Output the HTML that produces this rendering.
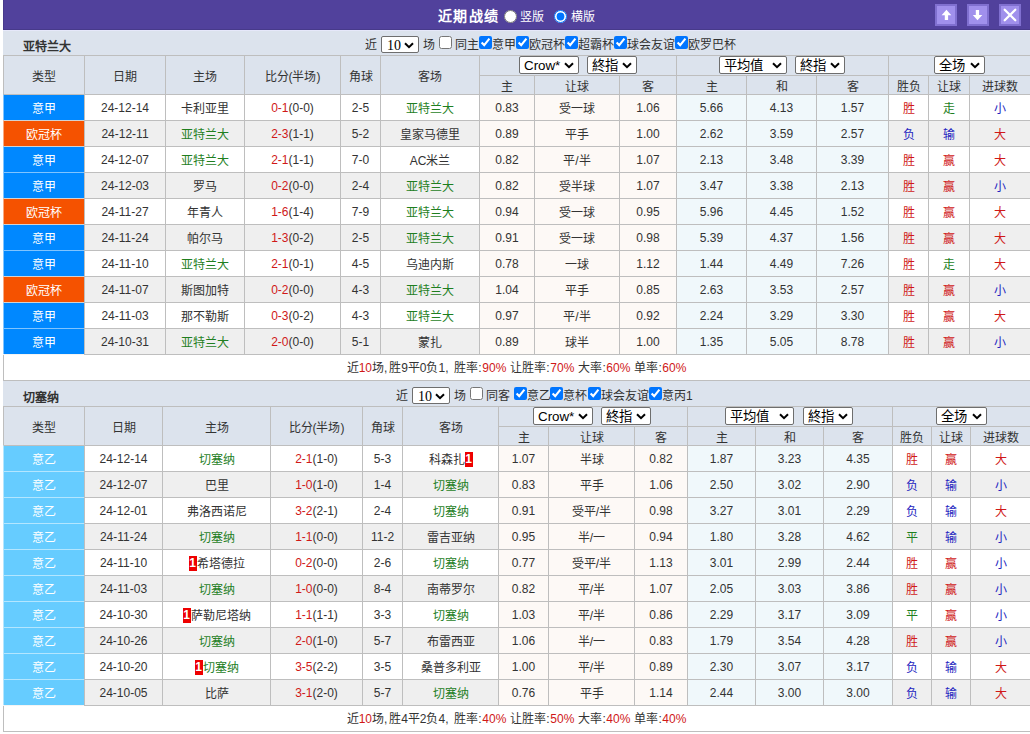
<!DOCTYPE html>
<html lang="zh-CN"><head><meta charset="utf-8">
<style>
html,body{margin:0;padding:0;background:#fff;}
body{width:1030px;height:734px;overflow:hidden;position:relative;font-family:"Liberation Sans",sans-serif;font-size:12px;color:#333333;}
body>div,body>select,body>input{position:absolute;box-sizing:border-box;}
.t{white-space:nowrap;text-align:center;z-index:3;}
.b{font-weight:bold;text-align:left;}
.cm{letter-spacing:1.8px;}
.co{letter-spacing:0.6px;}
.sm{word-spacing:0.7px;}
.bd{display:inline-block;background:#e00;color:#fff;width:8px;height:15px;line-height:15px;text-align:center;vertical-align:top;margin-top:4px;font-weight:bold;}
.rad{width:13px;height:13px;margin:0;}
.btn{width:22px;height:22px;background:#a090ec;border:2px solid #8070d0;box-sizing:border-box;display:flex;align-items:center;justify-content:center;}
.btn svg{display:block;}
.sel{z-index:4;border:1px solid #6e6e6e;border-radius:2px;background:#fff;color:#000;font-size:13.33px;}
.sel span{position:absolute;top:1px;line-height:16px;white-space:nowrap;}
.sel .chev{position:absolute;right:4px;top:5px;}
.cb{z-index:4;width:13px;height:13px;margin:0;}
</style></head><body>
<div style="left:3px;top:0px;width:1027px;height:30px;background:#51419c"></div>
<div style="left:3px;top:29px;width:1027px;height:1px;background:#473a8a"></div>
<div style="left:3px;top:30px;width:1027px;height:1px;background:#e6e8fa;z-index:1"></div>
<div style="left:3px;top:0px;width:1px;height:29px;background:#483a8c"></div>
<div class="t" style="left:438px;top:0;height:30px;line-height:32px;color:#fff;font-size:14px;letter-spacing:1.3px;font-weight:bold">近期战绩</div>
<input type="radio" name="r" class="rad" style="left:504px;top:10px">
<div class="t" style="left:520px;top:0;height:30px;line-height:35px;color:#fff">竖版</div>
<input type="radio" name="r" checked class="rad" style="left:554px;top:10px">
<div class="t" style="left:571px;top:0;height:30px;line-height:35px;color:#fff">横版</div>
<div class="btn" style="left:935px;top:4px"><svg width="18" height="18" viewBox="0 0 18 18"><path d="M4.6 9.2 L9.45 3.8 L14.3 9.2 L11.1 9.2 L11.1 14 L7.8 14 L7.8 9.2 Z" fill="#fff"/></svg></div>
<div class="btn" style="left:967px;top:4px"><svg width="18" height="18" viewBox="0 0 18 18"><path d="M6.8 4 L10.1 4 L10.1 8.9 L13.3 8.9 L8.5 14.3 L3.8 8.9 L6.8 8.9 Z" fill="#fff"/></svg></div>
<div class="btn" style="left:999px;top:4px"><svg width="18" height="18" viewBox="0 0 18 18"><path d="M3.7 3.7 L14.3 14.3 M14.3 3.7 L3.7 14.3" stroke="#fff" stroke-width="2.3" stroke-linecap="round"/></svg></div>
<div style="left:3px;top:30px;width:1027px;height:25px;background:#dce3ed"></div>
<div class="t b" style="left:23px;top:34px;height:25px;line-height:26px">亚特兰大</div>
<div class="t" style="left:365px;top:30px;height:25px;line-height:30px">近</div><div class="t" style="left:423px;top:30px;height:25px;line-height:30px">场</div><input type="checkbox" class="cb" style="left:439px;top:36px"><div class="t" style="left:455px;top:30px;height:25px;line-height:30px">同主</div><input type="checkbox" checked class="cb" style="left:479px;top:36px"><div class="t" style="left:492px;top:30px;height:25px;line-height:30px">意甲</div><input type="checkbox" checked class="cb" style="left:516px;top:36px"><div class="t" style="left:529px;top:30px;height:25px;line-height:30px">欧冠杯</div><input type="checkbox" checked class="cb" style="left:565px;top:36px"><div class="t" style="left:578px;top:30px;height:25px;line-height:30px">超霸杯</div><input type="checkbox" checked class="cb" style="left:614px;top:36px"><div class="t" style="left:627px;top:30px;height:25px;line-height:30px">球会友谊</div><input type="checkbox" checked class="cb" style="left:675px;top:36px"><div class="t" style="left:688px;top:30px;height:25px;line-height:30px">欧罗巴杯</div>
<div style="left:3px;top:55px;width:1027px;height:39px;background:#dce3ed"></div>
<div style="left:3px;top:55px;width:1027px;height:1px;background:#bebebe;z-index:2"></div>
<div style="left:3px;top:94px;width:1027px;height:1px;background:#bebebe;z-index:2"></div>
<div style="left:479px;top:75px;width:551px;height:1px;background:#bebebe;z-index:2"></div>
<div style="left:3px;top:55px;width:1px;height:39px;background:#bebebe;z-index:2"></div>
<div style="left:84px;top:55px;width:1px;height:39px;background:#bebebe;z-index:2"></div>
<div style="left:165px;top:55px;width:1px;height:39px;background:#bebebe;z-index:2"></div>
<div style="left:244px;top:55px;width:1px;height:39px;background:#bebebe;z-index:2"></div>
<div style="left:340px;top:55px;width:1px;height:39px;background:#bebebe;z-index:2"></div>
<div style="left:380px;top:55px;width:1px;height:39px;background:#bebebe;z-index:2"></div>
<div style="left:479px;top:55px;width:1px;height:39px;background:#bebebe;z-index:2"></div>
<div style="left:534px;top:75px;width:1px;height:19px;background:#bebebe;z-index:2"></div>
<div style="left:619px;top:75px;width:1px;height:19px;background:#bebebe;z-index:2"></div>
<div style="left:676px;top:55px;width:1px;height:39px;background:#bebebe;z-index:2"></div>
<div style="left:746px;top:75px;width:1px;height:19px;background:#bebebe;z-index:2"></div>
<div style="left:816px;top:75px;width:1px;height:19px;background:#bebebe;z-index:2"></div>
<div style="left:888px;top:55px;width:1px;height:39px;background:#bebebe;z-index:2"></div>
<div style="left:928px;top:75px;width:1px;height:19px;background:#bebebe;z-index:2"></div>
<div style="left:969px;top:75px;width:1px;height:19px;background:#bebebe;z-index:2"></div>
<div class="t" style="left:4px;top:58px;width:80px;height:38px;line-height:38px;">类型</div>
<div class="t" style="left:85px;top:58px;width:80px;height:38px;line-height:38px;">日期</div>
<div class="t" style="left:166px;top:58px;width:78px;height:38px;line-height:38px;">主场</div>
<div class="t" style="left:245px;top:58px;width:95px;height:38px;line-height:38px;">比分(半场)</div>
<div class="t" style="left:341px;top:58px;width:39px;height:38px;line-height:38px;">角球</div>
<div class="t" style="left:381px;top:58px;width:98px;height:38px;line-height:38px;">客场</div>
<div class="t" style="left:480px;top:78px;width:54px;height:18px;line-height:18px;">主</div>
<div class="t" style="left:535px;top:78px;width:84px;height:18px;line-height:18px;">让球</div>
<div class="t" style="left:620px;top:78px;width:56px;height:18px;line-height:18px;">客</div>
<div class="t" style="left:677px;top:78px;width:69px;height:18px;line-height:18px;">主</div>
<div class="t" style="left:747px;top:78px;width:69px;height:18px;line-height:18px;">和</div>
<div class="t" style="left:817px;top:78px;width:71px;height:18px;line-height:18px;">客</div>
<div class="t" style="left:889px;top:78px;width:39px;height:18px;line-height:18px;">胜负</div>
<div class="t" style="left:929px;top:78px;width:40px;height:18px;line-height:18px;">让球</div>
<div class="t" style="left:970px;top:78px;width:60px;height:18px;line-height:18px;">进球数</div>
<div style="left:3px;top:94px;width:1027px;height:26px;background:#ffffff"></div>
<div style="left:480px;top:95px;width:196px;height:25px;background:#fdf9f6"></div>
<div style="left:677px;top:95px;width:211px;height:25px;background:#f0f8fb"></div>
<div style="left:3px;top:94px;width:81px;height:26px;background:#0088ff;border-top:1px solid #bebebe;border-left:1px solid rgba(255,255,255,.5);z-index:3"></div>
<div style="left:3px;top:120px;width:1027px;height:1px;background:#bebebe;z-index:2"></div>
<div style="left:3px;top:94px;width:1px;height:26px;background:#bebebe;z-index:2"></div>
<div style="left:84px;top:94px;width:1px;height:26px;background:#bebebe;z-index:2"></div>
<div style="left:165px;top:94px;width:1px;height:26px;background:#bebebe;z-index:2"></div>
<div style="left:244px;top:94px;width:1px;height:26px;background:#bebebe;z-index:2"></div>
<div style="left:340px;top:94px;width:1px;height:26px;background:#bebebe;z-index:2"></div>
<div style="left:380px;top:94px;width:1px;height:26px;background:#bebebe;z-index:2"></div>
<div style="left:479px;top:94px;width:1px;height:26px;background:#bebebe;z-index:2"></div>
<div style="left:534px;top:94px;width:1px;height:26px;background:#bebebe;z-index:2"></div>
<div style="left:619px;top:94px;width:1px;height:26px;background:#bebebe;z-index:2"></div>
<div style="left:676px;top:94px;width:1px;height:26px;background:#bebebe;z-index:2"></div>
<div style="left:746px;top:94px;width:1px;height:26px;background:#bebebe;z-index:2"></div>
<div style="left:816px;top:94px;width:1px;height:26px;background:#bebebe;z-index:2"></div>
<div style="left:888px;top:94px;width:1px;height:26px;background:#bebebe;z-index:2"></div>
<div style="left:928px;top:94px;width:1px;height:26px;background:#bebebe;z-index:2"></div>
<div style="left:969px;top:94px;width:1px;height:26px;background:#bebebe;z-index:2"></div>
<div class="t" style="left:4px;top:97px;width:80px;height:25px;line-height:25px;"><span style="color:#fff">意甲</span></div>
<div class="t" style="left:85px;top:96px;width:80px;height:25px;line-height:25px;">24-12-14</div>
<div class="t" style="left:166px;top:97px;width:78px;height:25px;line-height:25px;">卡利亚里</div>
<div class="t" style="left:245px;top:96px;width:95px;height:25px;line-height:25px;"><span style="color:#d01818">0-1</span>(0-0)</div>
<div class="t" style="left:341px;top:96px;width:39px;height:25px;line-height:25px;">2-5</div>
<div class="t" style="left:381px;top:97px;width:98px;height:25px;line-height:25px;"><span style="color:#1f7f1f">亚特兰大</span></div>
<div class="t" style="left:480px;top:96px;width:54px;height:25px;line-height:25px;">0.83</div>
<div class="t" style="left:535px;top:97px;width:84px;height:25px;line-height:25px;">受一球</div>
<div class="t" style="left:620px;top:96px;width:56px;height:25px;line-height:25px;">1.06</div>
<div class="t" style="left:677px;top:96px;width:69px;height:25px;line-height:25px;">5.66</div>
<div class="t" style="left:747px;top:96px;width:69px;height:25px;line-height:25px;">4.13</div>
<div class="t" style="left:817px;top:96px;width:71px;height:25px;line-height:25px;">1.57</div>
<div class="t" style="left:889px;top:97px;width:39px;height:25px;line-height:25px;"><span style="color:#d01818">胜</span></div>
<div class="t" style="left:929px;top:97px;width:40px;height:25px;line-height:25px;"><span style="color:#1f7f1f">走</span></div>
<div class="t" style="left:970px;top:97px;width:60px;height:25px;line-height:25px;"><span style="color:#2424c0">小</span></div>
<div style="left:3px;top:120px;width:1027px;height:26px;background:#efefef"></div>
<div style="left:480px;top:121px;width:196px;height:25px;background:#fdf9f6"></div>
<div style="left:677px;top:121px;width:211px;height:25px;background:#f0f8fb"></div>
<div style="left:3px;top:120px;width:81px;height:26px;background:#f55200;border-top:1px solid #d2d2d2;border-left:1px solid rgba(255,255,255,.5);z-index:3"></div>
<div style="left:3px;top:146px;width:1027px;height:1px;background:#bebebe;z-index:2"></div>
<div style="left:3px;top:120px;width:1px;height:26px;background:#bebebe;z-index:2"></div>
<div style="left:84px;top:120px;width:1px;height:26px;background:#bebebe;z-index:2"></div>
<div style="left:165px;top:120px;width:1px;height:26px;background:#bebebe;z-index:2"></div>
<div style="left:244px;top:120px;width:1px;height:26px;background:#bebebe;z-index:2"></div>
<div style="left:340px;top:120px;width:1px;height:26px;background:#bebebe;z-index:2"></div>
<div style="left:380px;top:120px;width:1px;height:26px;background:#bebebe;z-index:2"></div>
<div style="left:479px;top:120px;width:1px;height:26px;background:#bebebe;z-index:2"></div>
<div style="left:534px;top:120px;width:1px;height:26px;background:#bebebe;z-index:2"></div>
<div style="left:619px;top:120px;width:1px;height:26px;background:#bebebe;z-index:2"></div>
<div style="left:676px;top:120px;width:1px;height:26px;background:#bebebe;z-index:2"></div>
<div style="left:746px;top:120px;width:1px;height:26px;background:#bebebe;z-index:2"></div>
<div style="left:816px;top:120px;width:1px;height:26px;background:#bebebe;z-index:2"></div>
<div style="left:888px;top:120px;width:1px;height:26px;background:#bebebe;z-index:2"></div>
<div style="left:928px;top:120px;width:1px;height:26px;background:#bebebe;z-index:2"></div>
<div style="left:969px;top:120px;width:1px;height:26px;background:#bebebe;z-index:2"></div>
<div class="t" style="left:4px;top:123px;width:80px;height:25px;line-height:25px;"><span style="color:#fff">欧冠杯</span></div>
<div class="t" style="left:85px;top:122px;width:80px;height:25px;line-height:25px;">24-12-11</div>
<div class="t" style="left:166px;top:123px;width:78px;height:25px;line-height:25px;"><span style="color:#1f7f1f">亚特兰大</span></div>
<div class="t" style="left:245px;top:122px;width:95px;height:25px;line-height:25px;"><span style="color:#d01818">2-3</span>(1-1)</div>
<div class="t" style="left:341px;top:122px;width:39px;height:25px;line-height:25px;">5-2</div>
<div class="t" style="left:381px;top:123px;width:98px;height:25px;line-height:25px;">皇家马德里</div>
<div class="t" style="left:480px;top:122px;width:54px;height:25px;line-height:25px;">0.89</div>
<div class="t" style="left:535px;top:123px;width:84px;height:25px;line-height:25px;">平手</div>
<div class="t" style="left:620px;top:122px;width:56px;height:25px;line-height:25px;">1.00</div>
<div class="t" style="left:677px;top:122px;width:69px;height:25px;line-height:25px;">2.62</div>
<div class="t" style="left:747px;top:122px;width:69px;height:25px;line-height:25px;">3.59</div>
<div class="t" style="left:817px;top:122px;width:71px;height:25px;line-height:25px;">2.57</div>
<div class="t" style="left:889px;top:123px;width:39px;height:25px;line-height:25px;"><span style="color:#2424c0">负</span></div>
<div class="t" style="left:929px;top:123px;width:40px;height:25px;line-height:25px;"><span style="color:#2424c0">输</span></div>
<div class="t" style="left:970px;top:123px;width:60px;height:25px;line-height:25px;"><span style="color:#d01818">大</span></div>
<div style="left:3px;top:146px;width:1027px;height:26px;background:#ffffff"></div>
<div style="left:480px;top:147px;width:196px;height:25px;background:#fdf9f6"></div>
<div style="left:677px;top:147px;width:211px;height:25px;background:#f0f8fb"></div>
<div style="left:3px;top:146px;width:81px;height:26px;background:#0088ff;border-top:1px solid #d2d2d2;border-left:1px solid rgba(255,255,255,.5);z-index:3"></div>
<div style="left:3px;top:172px;width:1027px;height:1px;background:#bebebe;z-index:2"></div>
<div style="left:3px;top:146px;width:1px;height:26px;background:#bebebe;z-index:2"></div>
<div style="left:84px;top:146px;width:1px;height:26px;background:#bebebe;z-index:2"></div>
<div style="left:165px;top:146px;width:1px;height:26px;background:#bebebe;z-index:2"></div>
<div style="left:244px;top:146px;width:1px;height:26px;background:#bebebe;z-index:2"></div>
<div style="left:340px;top:146px;width:1px;height:26px;background:#bebebe;z-index:2"></div>
<div style="left:380px;top:146px;width:1px;height:26px;background:#bebebe;z-index:2"></div>
<div style="left:479px;top:146px;width:1px;height:26px;background:#bebebe;z-index:2"></div>
<div style="left:534px;top:146px;width:1px;height:26px;background:#bebebe;z-index:2"></div>
<div style="left:619px;top:146px;width:1px;height:26px;background:#bebebe;z-index:2"></div>
<div style="left:676px;top:146px;width:1px;height:26px;background:#bebebe;z-index:2"></div>
<div style="left:746px;top:146px;width:1px;height:26px;background:#bebebe;z-index:2"></div>
<div style="left:816px;top:146px;width:1px;height:26px;background:#bebebe;z-index:2"></div>
<div style="left:888px;top:146px;width:1px;height:26px;background:#bebebe;z-index:2"></div>
<div style="left:928px;top:146px;width:1px;height:26px;background:#bebebe;z-index:2"></div>
<div style="left:969px;top:146px;width:1px;height:26px;background:#bebebe;z-index:2"></div>
<div class="t" style="left:4px;top:149px;width:80px;height:25px;line-height:25px;"><span style="color:#fff">意甲</span></div>
<div class="t" style="left:85px;top:148px;width:80px;height:25px;line-height:25px;">24-12-07</div>
<div class="t" style="left:166px;top:149px;width:78px;height:25px;line-height:25px;"><span style="color:#1f7f1f">亚特兰大</span></div>
<div class="t" style="left:245px;top:148px;width:95px;height:25px;line-height:25px;"><span style="color:#d01818">2-1</span>(1-1)</div>
<div class="t" style="left:341px;top:148px;width:39px;height:25px;line-height:25px;">7-0</div>
<div class="t" style="left:381px;top:149px;width:98px;height:25px;line-height:25px;">AC米兰</div>
<div class="t" style="left:480px;top:148px;width:54px;height:25px;line-height:25px;">0.82</div>
<div class="t" style="left:535px;top:149px;width:84px;height:25px;line-height:25px;">平/半</div>
<div class="t" style="left:620px;top:148px;width:56px;height:25px;line-height:25px;">1.07</div>
<div class="t" style="left:677px;top:148px;width:69px;height:25px;line-height:25px;">2.13</div>
<div class="t" style="left:747px;top:148px;width:69px;height:25px;line-height:25px;">3.48</div>
<div class="t" style="left:817px;top:148px;width:71px;height:25px;line-height:25px;">3.39</div>
<div class="t" style="left:889px;top:149px;width:39px;height:25px;line-height:25px;"><span style="color:#d01818">胜</span></div>
<div class="t" style="left:929px;top:149px;width:40px;height:25px;line-height:25px;"><span style="color:#d01818">赢</span></div>
<div class="t" style="left:970px;top:149px;width:60px;height:25px;line-height:25px;"><span style="color:#d01818">大</span></div>
<div style="left:3px;top:172px;width:1027px;height:26px;background:#efefef"></div>
<div style="left:480px;top:173px;width:196px;height:25px;background:#fdf9f6"></div>
<div style="left:677px;top:173px;width:211px;height:25px;background:#f0f8fb"></div>
<div style="left:3px;top:172px;width:81px;height:26px;background:#0088ff;border-top:1px solid rgba(255,255,255,.5);border-left:1px solid rgba(255,255,255,.5);z-index:3"></div>
<div style="left:3px;top:198px;width:1027px;height:1px;background:#bebebe;z-index:2"></div>
<div style="left:3px;top:172px;width:1px;height:26px;background:#bebebe;z-index:2"></div>
<div style="left:84px;top:172px;width:1px;height:26px;background:#bebebe;z-index:2"></div>
<div style="left:165px;top:172px;width:1px;height:26px;background:#bebebe;z-index:2"></div>
<div style="left:244px;top:172px;width:1px;height:26px;background:#bebebe;z-index:2"></div>
<div style="left:340px;top:172px;width:1px;height:26px;background:#bebebe;z-index:2"></div>
<div style="left:380px;top:172px;width:1px;height:26px;background:#bebebe;z-index:2"></div>
<div style="left:479px;top:172px;width:1px;height:26px;background:#bebebe;z-index:2"></div>
<div style="left:534px;top:172px;width:1px;height:26px;background:#bebebe;z-index:2"></div>
<div style="left:619px;top:172px;width:1px;height:26px;background:#bebebe;z-index:2"></div>
<div style="left:676px;top:172px;width:1px;height:26px;background:#bebebe;z-index:2"></div>
<div style="left:746px;top:172px;width:1px;height:26px;background:#bebebe;z-index:2"></div>
<div style="left:816px;top:172px;width:1px;height:26px;background:#bebebe;z-index:2"></div>
<div style="left:888px;top:172px;width:1px;height:26px;background:#bebebe;z-index:2"></div>
<div style="left:928px;top:172px;width:1px;height:26px;background:#bebebe;z-index:2"></div>
<div style="left:969px;top:172px;width:1px;height:26px;background:#bebebe;z-index:2"></div>
<div class="t" style="left:4px;top:175px;width:80px;height:25px;line-height:25px;"><span style="color:#fff">意甲</span></div>
<div class="t" style="left:85px;top:174px;width:80px;height:25px;line-height:25px;">24-12-03</div>
<div class="t" style="left:166px;top:175px;width:78px;height:25px;line-height:25px;">罗马</div>
<div class="t" style="left:245px;top:174px;width:95px;height:25px;line-height:25px;"><span style="color:#d01818">0-2</span>(0-0)</div>
<div class="t" style="left:341px;top:174px;width:39px;height:25px;line-height:25px;">2-4</div>
<div class="t" style="left:381px;top:175px;width:98px;height:25px;line-height:25px;"><span style="color:#1f7f1f">亚特兰大</span></div>
<div class="t" style="left:480px;top:174px;width:54px;height:25px;line-height:25px;">0.82</div>
<div class="t" style="left:535px;top:175px;width:84px;height:25px;line-height:25px;">受半球</div>
<div class="t" style="left:620px;top:174px;width:56px;height:25px;line-height:25px;">1.07</div>
<div class="t" style="left:677px;top:174px;width:69px;height:25px;line-height:25px;">3.47</div>
<div class="t" style="left:747px;top:174px;width:69px;height:25px;line-height:25px;">3.38</div>
<div class="t" style="left:817px;top:174px;width:71px;height:25px;line-height:25px;">2.13</div>
<div class="t" style="left:889px;top:175px;width:39px;height:25px;line-height:25px;"><span style="color:#d01818">胜</span></div>
<div class="t" style="left:929px;top:175px;width:40px;height:25px;line-height:25px;"><span style="color:#d01818">赢</span></div>
<div class="t" style="left:970px;top:175px;width:60px;height:25px;line-height:25px;"><span style="color:#2424c0">小</span></div>
<div style="left:3px;top:198px;width:1027px;height:26px;background:#ffffff"></div>
<div style="left:480px;top:199px;width:196px;height:25px;background:#fdf9f6"></div>
<div style="left:677px;top:199px;width:211px;height:25px;background:#f0f8fb"></div>
<div style="left:3px;top:198px;width:81px;height:26px;background:#f55200;border-top:1px solid #d2d2d2;border-left:1px solid rgba(255,255,255,.5);z-index:3"></div>
<div style="left:3px;top:224px;width:1027px;height:1px;background:#bebebe;z-index:2"></div>
<div style="left:3px;top:198px;width:1px;height:26px;background:#bebebe;z-index:2"></div>
<div style="left:84px;top:198px;width:1px;height:26px;background:#bebebe;z-index:2"></div>
<div style="left:165px;top:198px;width:1px;height:26px;background:#bebebe;z-index:2"></div>
<div style="left:244px;top:198px;width:1px;height:26px;background:#bebebe;z-index:2"></div>
<div style="left:340px;top:198px;width:1px;height:26px;background:#bebebe;z-index:2"></div>
<div style="left:380px;top:198px;width:1px;height:26px;background:#bebebe;z-index:2"></div>
<div style="left:479px;top:198px;width:1px;height:26px;background:#bebebe;z-index:2"></div>
<div style="left:534px;top:198px;width:1px;height:26px;background:#bebebe;z-index:2"></div>
<div style="left:619px;top:198px;width:1px;height:26px;background:#bebebe;z-index:2"></div>
<div style="left:676px;top:198px;width:1px;height:26px;background:#bebebe;z-index:2"></div>
<div style="left:746px;top:198px;width:1px;height:26px;background:#bebebe;z-index:2"></div>
<div style="left:816px;top:198px;width:1px;height:26px;background:#bebebe;z-index:2"></div>
<div style="left:888px;top:198px;width:1px;height:26px;background:#bebebe;z-index:2"></div>
<div style="left:928px;top:198px;width:1px;height:26px;background:#bebebe;z-index:2"></div>
<div style="left:969px;top:198px;width:1px;height:26px;background:#bebebe;z-index:2"></div>
<div class="t" style="left:4px;top:201px;width:80px;height:25px;line-height:25px;"><span style="color:#fff">欧冠杯</span></div>
<div class="t" style="left:85px;top:200px;width:80px;height:25px;line-height:25px;">24-11-27</div>
<div class="t" style="left:166px;top:201px;width:78px;height:25px;line-height:25px;">年青人</div>
<div class="t" style="left:245px;top:200px;width:95px;height:25px;line-height:25px;"><span style="color:#d01818">1-6</span>(1-4)</div>
<div class="t" style="left:341px;top:200px;width:39px;height:25px;line-height:25px;">7-9</div>
<div class="t" style="left:381px;top:201px;width:98px;height:25px;line-height:25px;"><span style="color:#1f7f1f">亚特兰大</span></div>
<div class="t" style="left:480px;top:200px;width:54px;height:25px;line-height:25px;">0.94</div>
<div class="t" style="left:535px;top:201px;width:84px;height:25px;line-height:25px;">受一球</div>
<div class="t" style="left:620px;top:200px;width:56px;height:25px;line-height:25px;">0.95</div>
<div class="t" style="left:677px;top:200px;width:69px;height:25px;line-height:25px;">5.96</div>
<div class="t" style="left:747px;top:200px;width:69px;height:25px;line-height:25px;">4.45</div>
<div class="t" style="left:817px;top:200px;width:71px;height:25px;line-height:25px;">1.52</div>
<div class="t" style="left:889px;top:201px;width:39px;height:25px;line-height:25px;"><span style="color:#d01818">胜</span></div>
<div class="t" style="left:929px;top:201px;width:40px;height:25px;line-height:25px;"><span style="color:#d01818">赢</span></div>
<div class="t" style="left:970px;top:201px;width:60px;height:25px;line-height:25px;"><span style="color:#d01818">大</span></div>
<div style="left:3px;top:224px;width:1027px;height:26px;background:#efefef"></div>
<div style="left:480px;top:225px;width:196px;height:25px;background:#fdf9f6"></div>
<div style="left:677px;top:225px;width:211px;height:25px;background:#f0f8fb"></div>
<div style="left:3px;top:224px;width:81px;height:26px;background:#0088ff;border-top:1px solid #d2d2d2;border-left:1px solid rgba(255,255,255,.5);z-index:3"></div>
<div style="left:3px;top:250px;width:1027px;height:1px;background:#bebebe;z-index:2"></div>
<div style="left:3px;top:224px;width:1px;height:26px;background:#bebebe;z-index:2"></div>
<div style="left:84px;top:224px;width:1px;height:26px;background:#bebebe;z-index:2"></div>
<div style="left:165px;top:224px;width:1px;height:26px;background:#bebebe;z-index:2"></div>
<div style="left:244px;top:224px;width:1px;height:26px;background:#bebebe;z-index:2"></div>
<div style="left:340px;top:224px;width:1px;height:26px;background:#bebebe;z-index:2"></div>
<div style="left:380px;top:224px;width:1px;height:26px;background:#bebebe;z-index:2"></div>
<div style="left:479px;top:224px;width:1px;height:26px;background:#bebebe;z-index:2"></div>
<div style="left:534px;top:224px;width:1px;height:26px;background:#bebebe;z-index:2"></div>
<div style="left:619px;top:224px;width:1px;height:26px;background:#bebebe;z-index:2"></div>
<div style="left:676px;top:224px;width:1px;height:26px;background:#bebebe;z-index:2"></div>
<div style="left:746px;top:224px;width:1px;height:26px;background:#bebebe;z-index:2"></div>
<div style="left:816px;top:224px;width:1px;height:26px;background:#bebebe;z-index:2"></div>
<div style="left:888px;top:224px;width:1px;height:26px;background:#bebebe;z-index:2"></div>
<div style="left:928px;top:224px;width:1px;height:26px;background:#bebebe;z-index:2"></div>
<div style="left:969px;top:224px;width:1px;height:26px;background:#bebebe;z-index:2"></div>
<div class="t" style="left:4px;top:227px;width:80px;height:25px;line-height:25px;"><span style="color:#fff">意甲</span></div>
<div class="t" style="left:85px;top:226px;width:80px;height:25px;line-height:25px;">24-11-24</div>
<div class="t" style="left:166px;top:227px;width:78px;height:25px;line-height:25px;">帕尔马</div>
<div class="t" style="left:245px;top:226px;width:95px;height:25px;line-height:25px;"><span style="color:#d01818">1-3</span>(0-2)</div>
<div class="t" style="left:341px;top:226px;width:39px;height:25px;line-height:25px;">2-5</div>
<div class="t" style="left:381px;top:227px;width:98px;height:25px;line-height:25px;"><span style="color:#1f7f1f">亚特兰大</span></div>
<div class="t" style="left:480px;top:226px;width:54px;height:25px;line-height:25px;">0.91</div>
<div class="t" style="left:535px;top:227px;width:84px;height:25px;line-height:25px;">受一球</div>
<div class="t" style="left:620px;top:226px;width:56px;height:25px;line-height:25px;">0.98</div>
<div class="t" style="left:677px;top:226px;width:69px;height:25px;line-height:25px;">5.39</div>
<div class="t" style="left:747px;top:226px;width:69px;height:25px;line-height:25px;">4.37</div>
<div class="t" style="left:817px;top:226px;width:71px;height:25px;line-height:25px;">1.56</div>
<div class="t" style="left:889px;top:227px;width:39px;height:25px;line-height:25px;"><span style="color:#d01818">胜</span></div>
<div class="t" style="left:929px;top:227px;width:40px;height:25px;line-height:25px;"><span style="color:#d01818">赢</span></div>
<div class="t" style="left:970px;top:227px;width:60px;height:25px;line-height:25px;"><span style="color:#d01818">大</span></div>
<div style="left:3px;top:250px;width:1027px;height:26px;background:#ffffff"></div>
<div style="left:480px;top:251px;width:196px;height:25px;background:#fdf9f6"></div>
<div style="left:677px;top:251px;width:211px;height:25px;background:#f0f8fb"></div>
<div style="left:3px;top:250px;width:81px;height:26px;background:#0088ff;border-top:1px solid rgba(255,255,255,.5);border-left:1px solid rgba(255,255,255,.5);z-index:3"></div>
<div style="left:3px;top:276px;width:1027px;height:1px;background:#bebebe;z-index:2"></div>
<div style="left:3px;top:250px;width:1px;height:26px;background:#bebebe;z-index:2"></div>
<div style="left:84px;top:250px;width:1px;height:26px;background:#bebebe;z-index:2"></div>
<div style="left:165px;top:250px;width:1px;height:26px;background:#bebebe;z-index:2"></div>
<div style="left:244px;top:250px;width:1px;height:26px;background:#bebebe;z-index:2"></div>
<div style="left:340px;top:250px;width:1px;height:26px;background:#bebebe;z-index:2"></div>
<div style="left:380px;top:250px;width:1px;height:26px;background:#bebebe;z-index:2"></div>
<div style="left:479px;top:250px;width:1px;height:26px;background:#bebebe;z-index:2"></div>
<div style="left:534px;top:250px;width:1px;height:26px;background:#bebebe;z-index:2"></div>
<div style="left:619px;top:250px;width:1px;height:26px;background:#bebebe;z-index:2"></div>
<div style="left:676px;top:250px;width:1px;height:26px;background:#bebebe;z-index:2"></div>
<div style="left:746px;top:250px;width:1px;height:26px;background:#bebebe;z-index:2"></div>
<div style="left:816px;top:250px;width:1px;height:26px;background:#bebebe;z-index:2"></div>
<div style="left:888px;top:250px;width:1px;height:26px;background:#bebebe;z-index:2"></div>
<div style="left:928px;top:250px;width:1px;height:26px;background:#bebebe;z-index:2"></div>
<div style="left:969px;top:250px;width:1px;height:26px;background:#bebebe;z-index:2"></div>
<div class="t" style="left:4px;top:253px;width:80px;height:25px;line-height:25px;"><span style="color:#fff">意甲</span></div>
<div class="t" style="left:85px;top:252px;width:80px;height:25px;line-height:25px;">24-11-10</div>
<div class="t" style="left:166px;top:253px;width:78px;height:25px;line-height:25px;"><span style="color:#1f7f1f">亚特兰大</span></div>
<div class="t" style="left:245px;top:252px;width:95px;height:25px;line-height:25px;"><span style="color:#d01818">2-1</span>(0-1)</div>
<div class="t" style="left:341px;top:252px;width:39px;height:25px;line-height:25px;">4-5</div>
<div class="t" style="left:381px;top:253px;width:98px;height:25px;line-height:25px;">乌迪内斯</div>
<div class="t" style="left:480px;top:252px;width:54px;height:25px;line-height:25px;">0.78</div>
<div class="t" style="left:535px;top:253px;width:84px;height:25px;line-height:25px;">一球</div>
<div class="t" style="left:620px;top:252px;width:56px;height:25px;line-height:25px;">1.12</div>
<div class="t" style="left:677px;top:252px;width:69px;height:25px;line-height:25px;">1.44</div>
<div class="t" style="left:747px;top:252px;width:69px;height:25px;line-height:25px;">4.49</div>
<div class="t" style="left:817px;top:252px;width:71px;height:25px;line-height:25px;">7.26</div>
<div class="t" style="left:889px;top:253px;width:39px;height:25px;line-height:25px;"><span style="color:#d01818">胜</span></div>
<div class="t" style="left:929px;top:253px;width:40px;height:25px;line-height:25px;"><span style="color:#1f7f1f">走</span></div>
<div class="t" style="left:970px;top:253px;width:60px;height:25px;line-height:25px;"><span style="color:#d01818">大</span></div>
<div style="left:3px;top:276px;width:1027px;height:26px;background:#efefef"></div>
<div style="left:480px;top:277px;width:196px;height:25px;background:#fdf9f6"></div>
<div style="left:677px;top:277px;width:211px;height:25px;background:#f0f8fb"></div>
<div style="left:3px;top:276px;width:81px;height:26px;background:#f55200;border-top:1px solid #d2d2d2;border-left:1px solid rgba(255,255,255,.5);z-index:3"></div>
<div style="left:3px;top:302px;width:1027px;height:1px;background:#bebebe;z-index:2"></div>
<div style="left:3px;top:276px;width:1px;height:26px;background:#bebebe;z-index:2"></div>
<div style="left:84px;top:276px;width:1px;height:26px;background:#bebebe;z-index:2"></div>
<div style="left:165px;top:276px;width:1px;height:26px;background:#bebebe;z-index:2"></div>
<div style="left:244px;top:276px;width:1px;height:26px;background:#bebebe;z-index:2"></div>
<div style="left:340px;top:276px;width:1px;height:26px;background:#bebebe;z-index:2"></div>
<div style="left:380px;top:276px;width:1px;height:26px;background:#bebebe;z-index:2"></div>
<div style="left:479px;top:276px;width:1px;height:26px;background:#bebebe;z-index:2"></div>
<div style="left:534px;top:276px;width:1px;height:26px;background:#bebebe;z-index:2"></div>
<div style="left:619px;top:276px;width:1px;height:26px;background:#bebebe;z-index:2"></div>
<div style="left:676px;top:276px;width:1px;height:26px;background:#bebebe;z-index:2"></div>
<div style="left:746px;top:276px;width:1px;height:26px;background:#bebebe;z-index:2"></div>
<div style="left:816px;top:276px;width:1px;height:26px;background:#bebebe;z-index:2"></div>
<div style="left:888px;top:276px;width:1px;height:26px;background:#bebebe;z-index:2"></div>
<div style="left:928px;top:276px;width:1px;height:26px;background:#bebebe;z-index:2"></div>
<div style="left:969px;top:276px;width:1px;height:26px;background:#bebebe;z-index:2"></div>
<div class="t" style="left:4px;top:279px;width:80px;height:25px;line-height:25px;"><span style="color:#fff">欧冠杯</span></div>
<div class="t" style="left:85px;top:278px;width:80px;height:25px;line-height:25px;">24-11-07</div>
<div class="t" style="left:166px;top:279px;width:78px;height:25px;line-height:25px;">斯图加特</div>
<div class="t" style="left:245px;top:278px;width:95px;height:25px;line-height:25px;"><span style="color:#d01818">0-2</span>(0-0)</div>
<div class="t" style="left:341px;top:278px;width:39px;height:25px;line-height:25px;">4-3</div>
<div class="t" style="left:381px;top:279px;width:98px;height:25px;line-height:25px;"><span style="color:#1f7f1f">亚特兰大</span></div>
<div class="t" style="left:480px;top:278px;width:54px;height:25px;line-height:25px;">1.04</div>
<div class="t" style="left:535px;top:279px;width:84px;height:25px;line-height:25px;">平手</div>
<div class="t" style="left:620px;top:278px;width:56px;height:25px;line-height:25px;">0.85</div>
<div class="t" style="left:677px;top:278px;width:69px;height:25px;line-height:25px;">2.63</div>
<div class="t" style="left:747px;top:278px;width:69px;height:25px;line-height:25px;">3.53</div>
<div class="t" style="left:817px;top:278px;width:71px;height:25px;line-height:25px;">2.57</div>
<div class="t" style="left:889px;top:279px;width:39px;height:25px;line-height:25px;"><span style="color:#d01818">胜</span></div>
<div class="t" style="left:929px;top:279px;width:40px;height:25px;line-height:25px;"><span style="color:#d01818">赢</span></div>
<div class="t" style="left:970px;top:279px;width:60px;height:25px;line-height:25px;"><span style="color:#2424c0">小</span></div>
<div style="left:3px;top:302px;width:1027px;height:26px;background:#ffffff"></div>
<div style="left:480px;top:303px;width:196px;height:25px;background:#fdf9f6"></div>
<div style="left:677px;top:303px;width:211px;height:25px;background:#f0f8fb"></div>
<div style="left:3px;top:302px;width:81px;height:26px;background:#0088ff;border-top:1px solid #d2d2d2;border-left:1px solid rgba(255,255,255,.5);z-index:3"></div>
<div style="left:3px;top:328px;width:1027px;height:1px;background:#bebebe;z-index:2"></div>
<div style="left:3px;top:302px;width:1px;height:26px;background:#bebebe;z-index:2"></div>
<div style="left:84px;top:302px;width:1px;height:26px;background:#bebebe;z-index:2"></div>
<div style="left:165px;top:302px;width:1px;height:26px;background:#bebebe;z-index:2"></div>
<div style="left:244px;top:302px;width:1px;height:26px;background:#bebebe;z-index:2"></div>
<div style="left:340px;top:302px;width:1px;height:26px;background:#bebebe;z-index:2"></div>
<div style="left:380px;top:302px;width:1px;height:26px;background:#bebebe;z-index:2"></div>
<div style="left:479px;top:302px;width:1px;height:26px;background:#bebebe;z-index:2"></div>
<div style="left:534px;top:302px;width:1px;height:26px;background:#bebebe;z-index:2"></div>
<div style="left:619px;top:302px;width:1px;height:26px;background:#bebebe;z-index:2"></div>
<div style="left:676px;top:302px;width:1px;height:26px;background:#bebebe;z-index:2"></div>
<div style="left:746px;top:302px;width:1px;height:26px;background:#bebebe;z-index:2"></div>
<div style="left:816px;top:302px;width:1px;height:26px;background:#bebebe;z-index:2"></div>
<div style="left:888px;top:302px;width:1px;height:26px;background:#bebebe;z-index:2"></div>
<div style="left:928px;top:302px;width:1px;height:26px;background:#bebebe;z-index:2"></div>
<div style="left:969px;top:302px;width:1px;height:26px;background:#bebebe;z-index:2"></div>
<div class="t" style="left:4px;top:305px;width:80px;height:25px;line-height:25px;"><span style="color:#fff">意甲</span></div>
<div class="t" style="left:85px;top:304px;width:80px;height:25px;line-height:25px;">24-11-03</div>
<div class="t" style="left:166px;top:305px;width:78px;height:25px;line-height:25px;">那不勒斯</div>
<div class="t" style="left:245px;top:304px;width:95px;height:25px;line-height:25px;"><span style="color:#d01818">0-3</span>(0-2)</div>
<div class="t" style="left:341px;top:304px;width:39px;height:25px;line-height:25px;">4-3</div>
<div class="t" style="left:381px;top:305px;width:98px;height:25px;line-height:25px;"><span style="color:#1f7f1f">亚特兰大</span></div>
<div class="t" style="left:480px;top:304px;width:54px;height:25px;line-height:25px;">0.97</div>
<div class="t" style="left:535px;top:305px;width:84px;height:25px;line-height:25px;">平/半</div>
<div class="t" style="left:620px;top:304px;width:56px;height:25px;line-height:25px;">0.92</div>
<div class="t" style="left:677px;top:304px;width:69px;height:25px;line-height:25px;">2.24</div>
<div class="t" style="left:747px;top:304px;width:69px;height:25px;line-height:25px;">3.29</div>
<div class="t" style="left:817px;top:304px;width:71px;height:25px;line-height:25px;">3.30</div>
<div class="t" style="left:889px;top:305px;width:39px;height:25px;line-height:25px;"><span style="color:#d01818">胜</span></div>
<div class="t" style="left:929px;top:305px;width:40px;height:25px;line-height:25px;"><span style="color:#d01818">赢</span></div>
<div class="t" style="left:970px;top:305px;width:60px;height:25px;line-height:25px;"><span style="color:#d01818">大</span></div>
<div style="left:3px;top:328px;width:1027px;height:26px;background:#efefef"></div>
<div style="left:480px;top:329px;width:196px;height:25px;background:#fdf9f6"></div>
<div style="left:677px;top:329px;width:211px;height:25px;background:#f0f8fb"></div>
<div style="left:3px;top:328px;width:81px;height:26px;background:#0088ff;border-top:1px solid rgba(255,255,255,.5);border-left:1px solid rgba(255,255,255,.5);z-index:3"></div>
<div style="left:3px;top:354px;width:81px;height:1px;background:#f4f4f4;z-index:3"></div>
<div style="left:3px;top:354px;width:1027px;height:1px;background:#bebebe;z-index:2"></div>
<div style="left:3px;top:328px;width:1px;height:26px;background:#bebebe;z-index:2"></div>
<div style="left:84px;top:328px;width:1px;height:26px;background:#bebebe;z-index:2"></div>
<div style="left:165px;top:328px;width:1px;height:26px;background:#bebebe;z-index:2"></div>
<div style="left:244px;top:328px;width:1px;height:26px;background:#bebebe;z-index:2"></div>
<div style="left:340px;top:328px;width:1px;height:26px;background:#bebebe;z-index:2"></div>
<div style="left:380px;top:328px;width:1px;height:26px;background:#bebebe;z-index:2"></div>
<div style="left:479px;top:328px;width:1px;height:26px;background:#bebebe;z-index:2"></div>
<div style="left:534px;top:328px;width:1px;height:26px;background:#bebebe;z-index:2"></div>
<div style="left:619px;top:328px;width:1px;height:26px;background:#bebebe;z-index:2"></div>
<div style="left:676px;top:328px;width:1px;height:26px;background:#bebebe;z-index:2"></div>
<div style="left:746px;top:328px;width:1px;height:26px;background:#bebebe;z-index:2"></div>
<div style="left:816px;top:328px;width:1px;height:26px;background:#bebebe;z-index:2"></div>
<div style="left:888px;top:328px;width:1px;height:26px;background:#bebebe;z-index:2"></div>
<div style="left:928px;top:328px;width:1px;height:26px;background:#bebebe;z-index:2"></div>
<div style="left:969px;top:328px;width:1px;height:26px;background:#bebebe;z-index:2"></div>
<div class="t" style="left:4px;top:331px;width:80px;height:25px;line-height:25px;"><span style="color:#fff">意甲</span></div>
<div class="t" style="left:85px;top:330px;width:80px;height:25px;line-height:25px;">24-10-31</div>
<div class="t" style="left:166px;top:331px;width:78px;height:25px;line-height:25px;"><span style="color:#1f7f1f">亚特兰大</span></div>
<div class="t" style="left:245px;top:330px;width:95px;height:25px;line-height:25px;"><span style="color:#d01818">2-0</span>(0-0)</div>
<div class="t" style="left:341px;top:330px;width:39px;height:25px;line-height:25px;">5-1</div>
<div class="t" style="left:381px;top:331px;width:98px;height:25px;line-height:25px;">蒙扎</div>
<div class="t" style="left:480px;top:330px;width:54px;height:25px;line-height:25px;">0.89</div>
<div class="t" style="left:535px;top:331px;width:84px;height:25px;line-height:25px;">球半</div>
<div class="t" style="left:620px;top:330px;width:56px;height:25px;line-height:25px;">1.00</div>
<div class="t" style="left:677px;top:330px;width:69px;height:25px;line-height:25px;">1.35</div>
<div class="t" style="left:747px;top:330px;width:69px;height:25px;line-height:25px;">5.05</div>
<div class="t" style="left:817px;top:330px;width:71px;height:25px;line-height:25px;">8.78</div>
<div class="t" style="left:889px;top:331px;width:39px;height:25px;line-height:25px;"><span style="color:#d01818">胜</span></div>
<div class="t" style="left:929px;top:331px;width:40px;height:25px;line-height:25px;"><span style="color:#d01818">赢</span></div>
<div class="t" style="left:970px;top:331px;width:60px;height:25px;line-height:25px;"><span style="color:#2424c0">小</span></div>
<div style="left:3px;top:354px;width:1027px;height:26px;background:#fff"></div>
<div style="left:3px;top:354px;width:1px;height:27px;background:#bebebe;z-index:2"></div>
<div style="left:3px;top:380px;width:1027px;height:1px;background:#bebebe;z-index:2"></div>
<div class="t sm" style="left:3px;top:355px;width:1027px;height:26px;line-height:26px;text-align:center">近<span style="color:#d01818">10</span>场<span class="cm">,</span>胜9平0负1<span class="cm">,</span> 胜率<span class="co">:</span><span style="color:#d01818">90%</span> 让胜率<span class="co">:</span><span style="color:#d01818">70%</span> 大率<span class="co">:</span><span style="color:#d01818">60%</span> 单率<span class="co">:</span><span style="color:#d01818">60%</span></div>
<div style="left:3px;top:381px;width:1027px;height:25px;background:#dce3ed"></div>
<div class="t b" style="left:23px;top:385px;height:25px;line-height:26px">切塞纳</div>
<div class="t" style="left:396px;top:381px;height:25px;line-height:30px">近</div><div class="t" style="left:454px;top:381px;height:25px;line-height:30px">场</div><input type="checkbox" class="cb" style="left:470px;top:387px"><div class="t" style="left:486px;top:381px;height:25px;line-height:30px">同客</div><input type="checkbox" checked class="cb" style="left:514px;top:387px"><div class="t" style="left:527px;top:381px;height:25px;line-height:30px">意乙</div><input type="checkbox" checked class="cb" style="left:550px;top:387px"><div class="t" style="left:563px;top:381px;height:25px;line-height:30px">意杯</div><input type="checkbox" checked class="cb" style="left:588px;top:387px"><div class="t" style="left:601px;top:381px;height:25px;line-height:30px">球会友谊</div><input type="checkbox" checked class="cb" style="left:649px;top:387px"><div class="t" style="left:662px;top:381px;height:25px;line-height:30px">意丙1</div>
<div style="left:3px;top:406px;width:1027px;height:39px;background:#dce3ed"></div>
<div style="left:3px;top:406px;width:1027px;height:1px;background:#bebebe;z-index:2"></div>
<div style="left:3px;top:445px;width:1027px;height:1px;background:#bebebe;z-index:2"></div>
<div style="left:498px;top:426px;width:532px;height:1px;background:#bebebe;z-index:2"></div>
<div style="left:3px;top:406px;width:1px;height:39px;background:#bebebe;z-index:2"></div>
<div style="left:84px;top:406px;width:1px;height:39px;background:#bebebe;z-index:2"></div>
<div style="left:162px;top:406px;width:1px;height:39px;background:#bebebe;z-index:2"></div>
<div style="left:270px;top:406px;width:1px;height:39px;background:#bebebe;z-index:2"></div>
<div style="left:362px;top:406px;width:1px;height:39px;background:#bebebe;z-index:2"></div>
<div style="left:402px;top:406px;width:1px;height:39px;background:#bebebe;z-index:2"></div>
<div style="left:498px;top:406px;width:1px;height:39px;background:#bebebe;z-index:2"></div>
<div style="left:548px;top:426px;width:1px;height:19px;background:#bebebe;z-index:2"></div>
<div style="left:634px;top:426px;width:1px;height:19px;background:#bebebe;z-index:2"></div>
<div style="left:687px;top:406px;width:1px;height:39px;background:#bebebe;z-index:2"></div>
<div style="left:755px;top:426px;width:1px;height:19px;background:#bebebe;z-index:2"></div>
<div style="left:823px;top:426px;width:1px;height:19px;background:#bebebe;z-index:2"></div>
<div style="left:892px;top:406px;width:1px;height:39px;background:#bebebe;z-index:2"></div>
<div style="left:931px;top:426px;width:1px;height:19px;background:#bebebe;z-index:2"></div>
<div style="left:970px;top:426px;width:1px;height:19px;background:#bebebe;z-index:2"></div>
<div class="t" style="left:4px;top:409px;width:80px;height:38px;line-height:38px;">类型</div>
<div class="t" style="left:85px;top:409px;width:77px;height:38px;line-height:38px;">日期</div>
<div class="t" style="left:163px;top:409px;width:107px;height:38px;line-height:38px;">主场</div>
<div class="t" style="left:271px;top:409px;width:91px;height:38px;line-height:38px;">比分(半场)</div>
<div class="t" style="left:363px;top:409px;width:39px;height:38px;line-height:38px;">角球</div>
<div class="t" style="left:403px;top:409px;width:95px;height:38px;line-height:38px;">客场</div>
<div class="t" style="left:499px;top:429px;width:49px;height:18px;line-height:18px;">主</div>
<div class="t" style="left:549px;top:429px;width:85px;height:18px;line-height:18px;">让球</div>
<div class="t" style="left:635px;top:429px;width:52px;height:18px;line-height:18px;">客</div>
<div class="t" style="left:688px;top:429px;width:67px;height:18px;line-height:18px;">主</div>
<div class="t" style="left:756px;top:429px;width:67px;height:18px;line-height:18px;">和</div>
<div class="t" style="left:824px;top:429px;width:68px;height:18px;line-height:18px;">客</div>
<div class="t" style="left:893px;top:429px;width:38px;height:18px;line-height:18px;">胜负</div>
<div class="t" style="left:932px;top:429px;width:38px;height:18px;line-height:18px;">让球</div>
<div class="t" style="left:971px;top:429px;width:59px;height:18px;line-height:18px;">进球数</div>
<div style="left:3px;top:445px;width:1027px;height:26px;background:#ffffff"></div>
<div style="left:499px;top:446px;width:188px;height:25px;background:#fdf9f6"></div>
<div style="left:688px;top:446px;width:204px;height:25px;background:#f0f8fb"></div>
<div style="left:3px;top:445px;width:81px;height:26px;background:#66ccff;border-top:1px solid #bebebe;border-left:1px solid rgba(255,255,255,.5);z-index:3"></div>
<div style="left:3px;top:471px;width:1027px;height:1px;background:#bebebe;z-index:2"></div>
<div style="left:3px;top:445px;width:1px;height:26px;background:#bebebe;z-index:2"></div>
<div style="left:84px;top:445px;width:1px;height:26px;background:#bebebe;z-index:2"></div>
<div style="left:162px;top:445px;width:1px;height:26px;background:#bebebe;z-index:2"></div>
<div style="left:270px;top:445px;width:1px;height:26px;background:#bebebe;z-index:2"></div>
<div style="left:362px;top:445px;width:1px;height:26px;background:#bebebe;z-index:2"></div>
<div style="left:402px;top:445px;width:1px;height:26px;background:#bebebe;z-index:2"></div>
<div style="left:498px;top:445px;width:1px;height:26px;background:#bebebe;z-index:2"></div>
<div style="left:548px;top:445px;width:1px;height:26px;background:#bebebe;z-index:2"></div>
<div style="left:634px;top:445px;width:1px;height:26px;background:#bebebe;z-index:2"></div>
<div style="left:687px;top:445px;width:1px;height:26px;background:#bebebe;z-index:2"></div>
<div style="left:755px;top:445px;width:1px;height:26px;background:#bebebe;z-index:2"></div>
<div style="left:823px;top:445px;width:1px;height:26px;background:#bebebe;z-index:2"></div>
<div style="left:892px;top:445px;width:1px;height:26px;background:#bebebe;z-index:2"></div>
<div style="left:931px;top:445px;width:1px;height:26px;background:#bebebe;z-index:2"></div>
<div style="left:970px;top:445px;width:1px;height:26px;background:#bebebe;z-index:2"></div>
<div class="t" style="left:4px;top:448px;width:80px;height:25px;line-height:25px;"><span style="color:#fff">意乙</span></div>
<div class="t" style="left:85px;top:447px;width:77px;height:25px;line-height:25px;">24-12-14</div>
<div class="t" style="left:163px;top:448px;width:107px;height:25px;line-height:25px;"><span style="color:#1f7f1f">切塞纳</span></div>
<div class="t" style="left:271px;top:447px;width:91px;height:25px;line-height:25px;"><span style="color:#d01818">2-1</span>(1-0)</div>
<div class="t" style="left:363px;top:447px;width:39px;height:25px;line-height:25px;">5-3</div>
<div class="t" style="left:403px;top:448px;width:95px;height:25px;line-height:25px;">科森扎<span class="bd">1</span></div>
<div class="t" style="left:499px;top:447px;width:49px;height:25px;line-height:25px;">1.07</div>
<div class="t" style="left:549px;top:448px;width:85px;height:25px;line-height:25px;">半球</div>
<div class="t" style="left:635px;top:447px;width:52px;height:25px;line-height:25px;">0.82</div>
<div class="t" style="left:688px;top:447px;width:67px;height:25px;line-height:25px;">1.87</div>
<div class="t" style="left:756px;top:447px;width:67px;height:25px;line-height:25px;">3.23</div>
<div class="t" style="left:824px;top:447px;width:68px;height:25px;line-height:25px;">4.35</div>
<div class="t" style="left:893px;top:448px;width:38px;height:25px;line-height:25px;"><span style="color:#d01818">胜</span></div>
<div class="t" style="left:932px;top:448px;width:38px;height:25px;line-height:25px;"><span style="color:#d01818">赢</span></div>
<div class="t" style="left:971px;top:448px;width:59px;height:25px;line-height:25px;"><span style="color:#d01818">大</span></div>
<div style="left:3px;top:471px;width:1027px;height:26px;background:#efefef"></div>
<div style="left:499px;top:472px;width:188px;height:25px;background:#fdf9f6"></div>
<div style="left:688px;top:472px;width:204px;height:25px;background:#f0f8fb"></div>
<div style="left:3px;top:471px;width:81px;height:26px;background:#66ccff;border-top:1px solid rgba(255,255,255,.5);border-left:1px solid rgba(255,255,255,.5);z-index:3"></div>
<div style="left:3px;top:497px;width:1027px;height:1px;background:#bebebe;z-index:2"></div>
<div style="left:3px;top:471px;width:1px;height:26px;background:#bebebe;z-index:2"></div>
<div style="left:84px;top:471px;width:1px;height:26px;background:#bebebe;z-index:2"></div>
<div style="left:162px;top:471px;width:1px;height:26px;background:#bebebe;z-index:2"></div>
<div style="left:270px;top:471px;width:1px;height:26px;background:#bebebe;z-index:2"></div>
<div style="left:362px;top:471px;width:1px;height:26px;background:#bebebe;z-index:2"></div>
<div style="left:402px;top:471px;width:1px;height:26px;background:#bebebe;z-index:2"></div>
<div style="left:498px;top:471px;width:1px;height:26px;background:#bebebe;z-index:2"></div>
<div style="left:548px;top:471px;width:1px;height:26px;background:#bebebe;z-index:2"></div>
<div style="left:634px;top:471px;width:1px;height:26px;background:#bebebe;z-index:2"></div>
<div style="left:687px;top:471px;width:1px;height:26px;background:#bebebe;z-index:2"></div>
<div style="left:755px;top:471px;width:1px;height:26px;background:#bebebe;z-index:2"></div>
<div style="left:823px;top:471px;width:1px;height:26px;background:#bebebe;z-index:2"></div>
<div style="left:892px;top:471px;width:1px;height:26px;background:#bebebe;z-index:2"></div>
<div style="left:931px;top:471px;width:1px;height:26px;background:#bebebe;z-index:2"></div>
<div style="left:970px;top:471px;width:1px;height:26px;background:#bebebe;z-index:2"></div>
<div class="t" style="left:4px;top:474px;width:80px;height:25px;line-height:25px;"><span style="color:#fff">意乙</span></div>
<div class="t" style="left:85px;top:473px;width:77px;height:25px;line-height:25px;">24-12-07</div>
<div class="t" style="left:163px;top:474px;width:107px;height:25px;line-height:25px;">巴里</div>
<div class="t" style="left:271px;top:473px;width:91px;height:25px;line-height:25px;"><span style="color:#d01818">1-0</span>(1-0)</div>
<div class="t" style="left:363px;top:473px;width:39px;height:25px;line-height:25px;">1-4</div>
<div class="t" style="left:403px;top:474px;width:95px;height:25px;line-height:25px;"><span style="color:#1f7f1f">切塞纳</span></div>
<div class="t" style="left:499px;top:473px;width:49px;height:25px;line-height:25px;">0.83</div>
<div class="t" style="left:549px;top:474px;width:85px;height:25px;line-height:25px;">平手</div>
<div class="t" style="left:635px;top:473px;width:52px;height:25px;line-height:25px;">1.06</div>
<div class="t" style="left:688px;top:473px;width:67px;height:25px;line-height:25px;">2.50</div>
<div class="t" style="left:756px;top:473px;width:67px;height:25px;line-height:25px;">3.02</div>
<div class="t" style="left:824px;top:473px;width:68px;height:25px;line-height:25px;">2.90</div>
<div class="t" style="left:893px;top:474px;width:38px;height:25px;line-height:25px;"><span style="color:#2424c0">负</span></div>
<div class="t" style="left:932px;top:474px;width:38px;height:25px;line-height:25px;"><span style="color:#2424c0">输</span></div>
<div class="t" style="left:971px;top:474px;width:59px;height:25px;line-height:25px;"><span style="color:#2424c0">小</span></div>
<div style="left:3px;top:497px;width:1027px;height:26px;background:#ffffff"></div>
<div style="left:499px;top:498px;width:188px;height:25px;background:#fdf9f6"></div>
<div style="left:688px;top:498px;width:204px;height:25px;background:#f0f8fb"></div>
<div style="left:3px;top:497px;width:81px;height:26px;background:#66ccff;border-top:1px solid rgba(255,255,255,.5);border-left:1px solid rgba(255,255,255,.5);z-index:3"></div>
<div style="left:3px;top:523px;width:1027px;height:1px;background:#bebebe;z-index:2"></div>
<div style="left:3px;top:497px;width:1px;height:26px;background:#bebebe;z-index:2"></div>
<div style="left:84px;top:497px;width:1px;height:26px;background:#bebebe;z-index:2"></div>
<div style="left:162px;top:497px;width:1px;height:26px;background:#bebebe;z-index:2"></div>
<div style="left:270px;top:497px;width:1px;height:26px;background:#bebebe;z-index:2"></div>
<div style="left:362px;top:497px;width:1px;height:26px;background:#bebebe;z-index:2"></div>
<div style="left:402px;top:497px;width:1px;height:26px;background:#bebebe;z-index:2"></div>
<div style="left:498px;top:497px;width:1px;height:26px;background:#bebebe;z-index:2"></div>
<div style="left:548px;top:497px;width:1px;height:26px;background:#bebebe;z-index:2"></div>
<div style="left:634px;top:497px;width:1px;height:26px;background:#bebebe;z-index:2"></div>
<div style="left:687px;top:497px;width:1px;height:26px;background:#bebebe;z-index:2"></div>
<div style="left:755px;top:497px;width:1px;height:26px;background:#bebebe;z-index:2"></div>
<div style="left:823px;top:497px;width:1px;height:26px;background:#bebebe;z-index:2"></div>
<div style="left:892px;top:497px;width:1px;height:26px;background:#bebebe;z-index:2"></div>
<div style="left:931px;top:497px;width:1px;height:26px;background:#bebebe;z-index:2"></div>
<div style="left:970px;top:497px;width:1px;height:26px;background:#bebebe;z-index:2"></div>
<div class="t" style="left:4px;top:500px;width:80px;height:25px;line-height:25px;"><span style="color:#fff">意乙</span></div>
<div class="t" style="left:85px;top:499px;width:77px;height:25px;line-height:25px;">24-12-01</div>
<div class="t" style="left:163px;top:500px;width:107px;height:25px;line-height:25px;">弗洛西诺尼</div>
<div class="t" style="left:271px;top:499px;width:91px;height:25px;line-height:25px;"><span style="color:#d01818">3-2</span>(2-1)</div>
<div class="t" style="left:363px;top:499px;width:39px;height:25px;line-height:25px;">2-4</div>
<div class="t" style="left:403px;top:500px;width:95px;height:25px;line-height:25px;"><span style="color:#1f7f1f">切塞纳</span></div>
<div class="t" style="left:499px;top:499px;width:49px;height:25px;line-height:25px;">0.91</div>
<div class="t" style="left:549px;top:500px;width:85px;height:25px;line-height:25px;">受平/半</div>
<div class="t" style="left:635px;top:499px;width:52px;height:25px;line-height:25px;">0.98</div>
<div class="t" style="left:688px;top:499px;width:67px;height:25px;line-height:25px;">3.27</div>
<div class="t" style="left:756px;top:499px;width:67px;height:25px;line-height:25px;">3.01</div>
<div class="t" style="left:824px;top:499px;width:68px;height:25px;line-height:25px;">2.29</div>
<div class="t" style="left:893px;top:500px;width:38px;height:25px;line-height:25px;"><span style="color:#2424c0">负</span></div>
<div class="t" style="left:932px;top:500px;width:38px;height:25px;line-height:25px;"><span style="color:#2424c0">输</span></div>
<div class="t" style="left:971px;top:500px;width:59px;height:25px;line-height:25px;"><span style="color:#d01818">大</span></div>
<div style="left:3px;top:523px;width:1027px;height:26px;background:#efefef"></div>
<div style="left:499px;top:524px;width:188px;height:25px;background:#fdf9f6"></div>
<div style="left:688px;top:524px;width:204px;height:25px;background:#f0f8fb"></div>
<div style="left:3px;top:523px;width:81px;height:26px;background:#66ccff;border-top:1px solid rgba(255,255,255,.5);border-left:1px solid rgba(255,255,255,.5);z-index:3"></div>
<div style="left:3px;top:549px;width:1027px;height:1px;background:#bebebe;z-index:2"></div>
<div style="left:3px;top:523px;width:1px;height:26px;background:#bebebe;z-index:2"></div>
<div style="left:84px;top:523px;width:1px;height:26px;background:#bebebe;z-index:2"></div>
<div style="left:162px;top:523px;width:1px;height:26px;background:#bebebe;z-index:2"></div>
<div style="left:270px;top:523px;width:1px;height:26px;background:#bebebe;z-index:2"></div>
<div style="left:362px;top:523px;width:1px;height:26px;background:#bebebe;z-index:2"></div>
<div style="left:402px;top:523px;width:1px;height:26px;background:#bebebe;z-index:2"></div>
<div style="left:498px;top:523px;width:1px;height:26px;background:#bebebe;z-index:2"></div>
<div style="left:548px;top:523px;width:1px;height:26px;background:#bebebe;z-index:2"></div>
<div style="left:634px;top:523px;width:1px;height:26px;background:#bebebe;z-index:2"></div>
<div style="left:687px;top:523px;width:1px;height:26px;background:#bebebe;z-index:2"></div>
<div style="left:755px;top:523px;width:1px;height:26px;background:#bebebe;z-index:2"></div>
<div style="left:823px;top:523px;width:1px;height:26px;background:#bebebe;z-index:2"></div>
<div style="left:892px;top:523px;width:1px;height:26px;background:#bebebe;z-index:2"></div>
<div style="left:931px;top:523px;width:1px;height:26px;background:#bebebe;z-index:2"></div>
<div style="left:970px;top:523px;width:1px;height:26px;background:#bebebe;z-index:2"></div>
<div class="t" style="left:4px;top:526px;width:80px;height:25px;line-height:25px;"><span style="color:#fff">意乙</span></div>
<div class="t" style="left:85px;top:525px;width:77px;height:25px;line-height:25px;">24-11-24</div>
<div class="t" style="left:163px;top:526px;width:107px;height:25px;line-height:25px;"><span style="color:#1f7f1f">切塞纳</span></div>
<div class="t" style="left:271px;top:525px;width:91px;height:25px;line-height:25px;"><span style="color:#d01818">1-1</span>(0-0)</div>
<div class="t" style="left:363px;top:525px;width:39px;height:25px;line-height:25px;">11-2</div>
<div class="t" style="left:403px;top:526px;width:95px;height:25px;line-height:25px;">雷吉亚纳</div>
<div class="t" style="left:499px;top:525px;width:49px;height:25px;line-height:25px;">0.95</div>
<div class="t" style="left:549px;top:526px;width:85px;height:25px;line-height:25px;">半/一</div>
<div class="t" style="left:635px;top:525px;width:52px;height:25px;line-height:25px;">0.94</div>
<div class="t" style="left:688px;top:525px;width:67px;height:25px;line-height:25px;">1.80</div>
<div class="t" style="left:756px;top:525px;width:67px;height:25px;line-height:25px;">3.28</div>
<div class="t" style="left:824px;top:525px;width:68px;height:25px;line-height:25px;">4.62</div>
<div class="t" style="left:893px;top:526px;width:38px;height:25px;line-height:25px;"><span style="color:#1f7f1f">平</span></div>
<div class="t" style="left:932px;top:526px;width:38px;height:25px;line-height:25px;"><span style="color:#2424c0">输</span></div>
<div class="t" style="left:971px;top:526px;width:59px;height:25px;line-height:25px;"><span style="color:#2424c0">小</span></div>
<div style="left:3px;top:549px;width:1027px;height:26px;background:#ffffff"></div>
<div style="left:499px;top:550px;width:188px;height:25px;background:#fdf9f6"></div>
<div style="left:688px;top:550px;width:204px;height:25px;background:#f0f8fb"></div>
<div style="left:3px;top:549px;width:81px;height:26px;background:#66ccff;border-top:1px solid rgba(255,255,255,.5);border-left:1px solid rgba(255,255,255,.5);z-index:3"></div>
<div style="left:3px;top:575px;width:1027px;height:1px;background:#bebebe;z-index:2"></div>
<div style="left:3px;top:549px;width:1px;height:26px;background:#bebebe;z-index:2"></div>
<div style="left:84px;top:549px;width:1px;height:26px;background:#bebebe;z-index:2"></div>
<div style="left:162px;top:549px;width:1px;height:26px;background:#bebebe;z-index:2"></div>
<div style="left:270px;top:549px;width:1px;height:26px;background:#bebebe;z-index:2"></div>
<div style="left:362px;top:549px;width:1px;height:26px;background:#bebebe;z-index:2"></div>
<div style="left:402px;top:549px;width:1px;height:26px;background:#bebebe;z-index:2"></div>
<div style="left:498px;top:549px;width:1px;height:26px;background:#bebebe;z-index:2"></div>
<div style="left:548px;top:549px;width:1px;height:26px;background:#bebebe;z-index:2"></div>
<div style="left:634px;top:549px;width:1px;height:26px;background:#bebebe;z-index:2"></div>
<div style="left:687px;top:549px;width:1px;height:26px;background:#bebebe;z-index:2"></div>
<div style="left:755px;top:549px;width:1px;height:26px;background:#bebebe;z-index:2"></div>
<div style="left:823px;top:549px;width:1px;height:26px;background:#bebebe;z-index:2"></div>
<div style="left:892px;top:549px;width:1px;height:26px;background:#bebebe;z-index:2"></div>
<div style="left:931px;top:549px;width:1px;height:26px;background:#bebebe;z-index:2"></div>
<div style="left:970px;top:549px;width:1px;height:26px;background:#bebebe;z-index:2"></div>
<div class="t" style="left:4px;top:552px;width:80px;height:25px;line-height:25px;"><span style="color:#fff">意乙</span></div>
<div class="t" style="left:85px;top:551px;width:77px;height:25px;line-height:25px;">24-11-10</div>
<div class="t" style="left:163px;top:552px;width:107px;height:25px;line-height:25px;"><span class="bd">1</span>希塔德拉</div>
<div class="t" style="left:271px;top:551px;width:91px;height:25px;line-height:25px;"><span style="color:#d01818">0-2</span>(0-0)</div>
<div class="t" style="left:363px;top:551px;width:39px;height:25px;line-height:25px;">2-6</div>
<div class="t" style="left:403px;top:552px;width:95px;height:25px;line-height:25px;"><span style="color:#1f7f1f">切塞纳</span></div>
<div class="t" style="left:499px;top:551px;width:49px;height:25px;line-height:25px;">0.77</div>
<div class="t" style="left:549px;top:552px;width:85px;height:25px;line-height:25px;">受平/半</div>
<div class="t" style="left:635px;top:551px;width:52px;height:25px;line-height:25px;">1.13</div>
<div class="t" style="left:688px;top:551px;width:67px;height:25px;line-height:25px;">3.01</div>
<div class="t" style="left:756px;top:551px;width:67px;height:25px;line-height:25px;">2.99</div>
<div class="t" style="left:824px;top:551px;width:68px;height:25px;line-height:25px;">2.44</div>
<div class="t" style="left:893px;top:552px;width:38px;height:25px;line-height:25px;"><span style="color:#d01818">胜</span></div>
<div class="t" style="left:932px;top:552px;width:38px;height:25px;line-height:25px;"><span style="color:#d01818">赢</span></div>
<div class="t" style="left:971px;top:552px;width:59px;height:25px;line-height:25px;"><span style="color:#2424c0">小</span></div>
<div style="left:3px;top:575px;width:1027px;height:26px;background:#efefef"></div>
<div style="left:499px;top:576px;width:188px;height:25px;background:#fdf9f6"></div>
<div style="left:688px;top:576px;width:204px;height:25px;background:#f0f8fb"></div>
<div style="left:3px;top:575px;width:81px;height:26px;background:#66ccff;border-top:1px solid rgba(255,255,255,.5);border-left:1px solid rgba(255,255,255,.5);z-index:3"></div>
<div style="left:3px;top:601px;width:1027px;height:1px;background:#bebebe;z-index:2"></div>
<div style="left:3px;top:575px;width:1px;height:26px;background:#bebebe;z-index:2"></div>
<div style="left:84px;top:575px;width:1px;height:26px;background:#bebebe;z-index:2"></div>
<div style="left:162px;top:575px;width:1px;height:26px;background:#bebebe;z-index:2"></div>
<div style="left:270px;top:575px;width:1px;height:26px;background:#bebebe;z-index:2"></div>
<div style="left:362px;top:575px;width:1px;height:26px;background:#bebebe;z-index:2"></div>
<div style="left:402px;top:575px;width:1px;height:26px;background:#bebebe;z-index:2"></div>
<div style="left:498px;top:575px;width:1px;height:26px;background:#bebebe;z-index:2"></div>
<div style="left:548px;top:575px;width:1px;height:26px;background:#bebebe;z-index:2"></div>
<div style="left:634px;top:575px;width:1px;height:26px;background:#bebebe;z-index:2"></div>
<div style="left:687px;top:575px;width:1px;height:26px;background:#bebebe;z-index:2"></div>
<div style="left:755px;top:575px;width:1px;height:26px;background:#bebebe;z-index:2"></div>
<div style="left:823px;top:575px;width:1px;height:26px;background:#bebebe;z-index:2"></div>
<div style="left:892px;top:575px;width:1px;height:26px;background:#bebebe;z-index:2"></div>
<div style="left:931px;top:575px;width:1px;height:26px;background:#bebebe;z-index:2"></div>
<div style="left:970px;top:575px;width:1px;height:26px;background:#bebebe;z-index:2"></div>
<div class="t" style="left:4px;top:578px;width:80px;height:25px;line-height:25px;"><span style="color:#fff">意乙</span></div>
<div class="t" style="left:85px;top:577px;width:77px;height:25px;line-height:25px;">24-11-03</div>
<div class="t" style="left:163px;top:578px;width:107px;height:25px;line-height:25px;"><span style="color:#1f7f1f">切塞纳</span></div>
<div class="t" style="left:271px;top:577px;width:91px;height:25px;line-height:25px;"><span style="color:#d01818">1-0</span>(0-0)</div>
<div class="t" style="left:363px;top:577px;width:39px;height:25px;line-height:25px;">8-4</div>
<div class="t" style="left:403px;top:578px;width:95px;height:25px;line-height:25px;">南蒂罗尔</div>
<div class="t" style="left:499px;top:577px;width:49px;height:25px;line-height:25px;">0.82</div>
<div class="t" style="left:549px;top:578px;width:85px;height:25px;line-height:25px;">平/半</div>
<div class="t" style="left:635px;top:577px;width:52px;height:25px;line-height:25px;">1.07</div>
<div class="t" style="left:688px;top:577px;width:67px;height:25px;line-height:25px;">2.05</div>
<div class="t" style="left:756px;top:577px;width:67px;height:25px;line-height:25px;">3.03</div>
<div class="t" style="left:824px;top:577px;width:68px;height:25px;line-height:25px;">3.86</div>
<div class="t" style="left:893px;top:578px;width:38px;height:25px;line-height:25px;"><span style="color:#d01818">胜</span></div>
<div class="t" style="left:932px;top:578px;width:38px;height:25px;line-height:25px;"><span style="color:#d01818">赢</span></div>
<div class="t" style="left:971px;top:578px;width:59px;height:25px;line-height:25px;"><span style="color:#2424c0">小</span></div>
<div style="left:3px;top:601px;width:1027px;height:26px;background:#ffffff"></div>
<div style="left:499px;top:602px;width:188px;height:25px;background:#fdf9f6"></div>
<div style="left:688px;top:602px;width:204px;height:25px;background:#f0f8fb"></div>
<div style="left:3px;top:601px;width:81px;height:26px;background:#66ccff;border-top:1px solid rgba(255,255,255,.5);border-left:1px solid rgba(255,255,255,.5);z-index:3"></div>
<div style="left:3px;top:627px;width:1027px;height:1px;background:#bebebe;z-index:2"></div>
<div style="left:3px;top:601px;width:1px;height:26px;background:#bebebe;z-index:2"></div>
<div style="left:84px;top:601px;width:1px;height:26px;background:#bebebe;z-index:2"></div>
<div style="left:162px;top:601px;width:1px;height:26px;background:#bebebe;z-index:2"></div>
<div style="left:270px;top:601px;width:1px;height:26px;background:#bebebe;z-index:2"></div>
<div style="left:362px;top:601px;width:1px;height:26px;background:#bebebe;z-index:2"></div>
<div style="left:402px;top:601px;width:1px;height:26px;background:#bebebe;z-index:2"></div>
<div style="left:498px;top:601px;width:1px;height:26px;background:#bebebe;z-index:2"></div>
<div style="left:548px;top:601px;width:1px;height:26px;background:#bebebe;z-index:2"></div>
<div style="left:634px;top:601px;width:1px;height:26px;background:#bebebe;z-index:2"></div>
<div style="left:687px;top:601px;width:1px;height:26px;background:#bebebe;z-index:2"></div>
<div style="left:755px;top:601px;width:1px;height:26px;background:#bebebe;z-index:2"></div>
<div style="left:823px;top:601px;width:1px;height:26px;background:#bebebe;z-index:2"></div>
<div style="left:892px;top:601px;width:1px;height:26px;background:#bebebe;z-index:2"></div>
<div style="left:931px;top:601px;width:1px;height:26px;background:#bebebe;z-index:2"></div>
<div style="left:970px;top:601px;width:1px;height:26px;background:#bebebe;z-index:2"></div>
<div class="t" style="left:4px;top:604px;width:80px;height:25px;line-height:25px;"><span style="color:#fff">意乙</span></div>
<div class="t" style="left:85px;top:603px;width:77px;height:25px;line-height:25px;">24-10-30</div>
<div class="t" style="left:163px;top:604px;width:107px;height:25px;line-height:25px;"><span class="bd">1</span>萨勒尼塔纳</div>
<div class="t" style="left:271px;top:603px;width:91px;height:25px;line-height:25px;"><span style="color:#d01818">1-1</span>(1-1)</div>
<div class="t" style="left:363px;top:603px;width:39px;height:25px;line-height:25px;">3-3</div>
<div class="t" style="left:403px;top:604px;width:95px;height:25px;line-height:25px;"><span style="color:#1f7f1f">切塞纳</span></div>
<div class="t" style="left:499px;top:603px;width:49px;height:25px;line-height:25px;">1.03</div>
<div class="t" style="left:549px;top:604px;width:85px;height:25px;line-height:25px;">平/半</div>
<div class="t" style="left:635px;top:603px;width:52px;height:25px;line-height:25px;">0.86</div>
<div class="t" style="left:688px;top:603px;width:67px;height:25px;line-height:25px;">2.29</div>
<div class="t" style="left:756px;top:603px;width:67px;height:25px;line-height:25px;">3.17</div>
<div class="t" style="left:824px;top:603px;width:68px;height:25px;line-height:25px;">3.09</div>
<div class="t" style="left:893px;top:604px;width:38px;height:25px;line-height:25px;"><span style="color:#1f7f1f">平</span></div>
<div class="t" style="left:932px;top:604px;width:38px;height:25px;line-height:25px;"><span style="color:#d01818">赢</span></div>
<div class="t" style="left:971px;top:604px;width:59px;height:25px;line-height:25px;"><span style="color:#2424c0">小</span></div>
<div style="left:3px;top:627px;width:1027px;height:26px;background:#efefef"></div>
<div style="left:499px;top:628px;width:188px;height:25px;background:#fdf9f6"></div>
<div style="left:688px;top:628px;width:204px;height:25px;background:#f0f8fb"></div>
<div style="left:3px;top:627px;width:81px;height:26px;background:#66ccff;border-top:1px solid rgba(255,255,255,.5);border-left:1px solid rgba(255,255,255,.5);z-index:3"></div>
<div style="left:3px;top:653px;width:1027px;height:1px;background:#bebebe;z-index:2"></div>
<div style="left:3px;top:627px;width:1px;height:26px;background:#bebebe;z-index:2"></div>
<div style="left:84px;top:627px;width:1px;height:26px;background:#bebebe;z-index:2"></div>
<div style="left:162px;top:627px;width:1px;height:26px;background:#bebebe;z-index:2"></div>
<div style="left:270px;top:627px;width:1px;height:26px;background:#bebebe;z-index:2"></div>
<div style="left:362px;top:627px;width:1px;height:26px;background:#bebebe;z-index:2"></div>
<div style="left:402px;top:627px;width:1px;height:26px;background:#bebebe;z-index:2"></div>
<div style="left:498px;top:627px;width:1px;height:26px;background:#bebebe;z-index:2"></div>
<div style="left:548px;top:627px;width:1px;height:26px;background:#bebebe;z-index:2"></div>
<div style="left:634px;top:627px;width:1px;height:26px;background:#bebebe;z-index:2"></div>
<div style="left:687px;top:627px;width:1px;height:26px;background:#bebebe;z-index:2"></div>
<div style="left:755px;top:627px;width:1px;height:26px;background:#bebebe;z-index:2"></div>
<div style="left:823px;top:627px;width:1px;height:26px;background:#bebebe;z-index:2"></div>
<div style="left:892px;top:627px;width:1px;height:26px;background:#bebebe;z-index:2"></div>
<div style="left:931px;top:627px;width:1px;height:26px;background:#bebebe;z-index:2"></div>
<div style="left:970px;top:627px;width:1px;height:26px;background:#bebebe;z-index:2"></div>
<div class="t" style="left:4px;top:630px;width:80px;height:25px;line-height:25px;"><span style="color:#fff">意乙</span></div>
<div class="t" style="left:85px;top:629px;width:77px;height:25px;line-height:25px;">24-10-26</div>
<div class="t" style="left:163px;top:630px;width:107px;height:25px;line-height:25px;"><span style="color:#1f7f1f">切塞纳</span></div>
<div class="t" style="left:271px;top:629px;width:91px;height:25px;line-height:25px;"><span style="color:#d01818">2-0</span>(1-0)</div>
<div class="t" style="left:363px;top:629px;width:39px;height:25px;line-height:25px;">5-7</div>
<div class="t" style="left:403px;top:630px;width:95px;height:25px;line-height:25px;">布雷西亚</div>
<div class="t" style="left:499px;top:629px;width:49px;height:25px;line-height:25px;">1.06</div>
<div class="t" style="left:549px;top:630px;width:85px;height:25px;line-height:25px;">半/一</div>
<div class="t" style="left:635px;top:629px;width:52px;height:25px;line-height:25px;">0.83</div>
<div class="t" style="left:688px;top:629px;width:67px;height:25px;line-height:25px;">1.79</div>
<div class="t" style="left:756px;top:629px;width:67px;height:25px;line-height:25px;">3.54</div>
<div class="t" style="left:824px;top:629px;width:68px;height:25px;line-height:25px;">4.28</div>
<div class="t" style="left:893px;top:630px;width:38px;height:25px;line-height:25px;"><span style="color:#d01818">胜</span></div>
<div class="t" style="left:932px;top:630px;width:38px;height:25px;line-height:25px;"><span style="color:#d01818">赢</span></div>
<div class="t" style="left:971px;top:630px;width:59px;height:25px;line-height:25px;"><span style="color:#2424c0">小</span></div>
<div style="left:3px;top:653px;width:1027px;height:26px;background:#ffffff"></div>
<div style="left:499px;top:654px;width:188px;height:25px;background:#fdf9f6"></div>
<div style="left:688px;top:654px;width:204px;height:25px;background:#f0f8fb"></div>
<div style="left:3px;top:653px;width:81px;height:26px;background:#66ccff;border-top:1px solid rgba(255,255,255,.5);border-left:1px solid rgba(255,255,255,.5);z-index:3"></div>
<div style="left:3px;top:679px;width:1027px;height:1px;background:#bebebe;z-index:2"></div>
<div style="left:3px;top:653px;width:1px;height:26px;background:#bebebe;z-index:2"></div>
<div style="left:84px;top:653px;width:1px;height:26px;background:#bebebe;z-index:2"></div>
<div style="left:162px;top:653px;width:1px;height:26px;background:#bebebe;z-index:2"></div>
<div style="left:270px;top:653px;width:1px;height:26px;background:#bebebe;z-index:2"></div>
<div style="left:362px;top:653px;width:1px;height:26px;background:#bebebe;z-index:2"></div>
<div style="left:402px;top:653px;width:1px;height:26px;background:#bebebe;z-index:2"></div>
<div style="left:498px;top:653px;width:1px;height:26px;background:#bebebe;z-index:2"></div>
<div style="left:548px;top:653px;width:1px;height:26px;background:#bebebe;z-index:2"></div>
<div style="left:634px;top:653px;width:1px;height:26px;background:#bebebe;z-index:2"></div>
<div style="left:687px;top:653px;width:1px;height:26px;background:#bebebe;z-index:2"></div>
<div style="left:755px;top:653px;width:1px;height:26px;background:#bebebe;z-index:2"></div>
<div style="left:823px;top:653px;width:1px;height:26px;background:#bebebe;z-index:2"></div>
<div style="left:892px;top:653px;width:1px;height:26px;background:#bebebe;z-index:2"></div>
<div style="left:931px;top:653px;width:1px;height:26px;background:#bebebe;z-index:2"></div>
<div style="left:970px;top:653px;width:1px;height:26px;background:#bebebe;z-index:2"></div>
<div class="t" style="left:4px;top:656px;width:80px;height:25px;line-height:25px;"><span style="color:#fff">意乙</span></div>
<div class="t" style="left:85px;top:655px;width:77px;height:25px;line-height:25px;">24-10-20</div>
<div class="t" style="left:163px;top:656px;width:107px;height:25px;line-height:25px;"><span class="bd">1</span><span style="color:#1f7f1f">切塞纳</span></div>
<div class="t" style="left:271px;top:655px;width:91px;height:25px;line-height:25px;"><span style="color:#d01818">3-5</span>(2-2)</div>
<div class="t" style="left:363px;top:655px;width:39px;height:25px;line-height:25px;">3-5</div>
<div class="t" style="left:403px;top:656px;width:95px;height:25px;line-height:25px;">桑普多利亚</div>
<div class="t" style="left:499px;top:655px;width:49px;height:25px;line-height:25px;">1.00</div>
<div class="t" style="left:549px;top:656px;width:85px;height:25px;line-height:25px;">平/半</div>
<div class="t" style="left:635px;top:655px;width:52px;height:25px;line-height:25px;">0.89</div>
<div class="t" style="left:688px;top:655px;width:67px;height:25px;line-height:25px;">2.30</div>
<div class="t" style="left:756px;top:655px;width:67px;height:25px;line-height:25px;">3.07</div>
<div class="t" style="left:824px;top:655px;width:68px;height:25px;line-height:25px;">3.17</div>
<div class="t" style="left:893px;top:656px;width:38px;height:25px;line-height:25px;"><span style="color:#2424c0">负</span></div>
<div class="t" style="left:932px;top:656px;width:38px;height:25px;line-height:25px;"><span style="color:#2424c0">输</span></div>
<div class="t" style="left:971px;top:656px;width:59px;height:25px;line-height:25px;"><span style="color:#d01818">大</span></div>
<div style="left:3px;top:679px;width:1027px;height:26px;background:#efefef"></div>
<div style="left:499px;top:680px;width:188px;height:25px;background:#fdf9f6"></div>
<div style="left:688px;top:680px;width:204px;height:25px;background:#f0f8fb"></div>
<div style="left:3px;top:679px;width:81px;height:26px;background:#66ccff;border-top:1px solid rgba(255,255,255,.5);border-left:1px solid rgba(255,255,255,.5);z-index:3"></div>
<div style="left:3px;top:705px;width:81px;height:1px;background:#f4f4f4;z-index:3"></div>
<div style="left:3px;top:705px;width:1027px;height:1px;background:#bebebe;z-index:2"></div>
<div style="left:3px;top:679px;width:1px;height:26px;background:#bebebe;z-index:2"></div>
<div style="left:84px;top:679px;width:1px;height:26px;background:#bebebe;z-index:2"></div>
<div style="left:162px;top:679px;width:1px;height:26px;background:#bebebe;z-index:2"></div>
<div style="left:270px;top:679px;width:1px;height:26px;background:#bebebe;z-index:2"></div>
<div style="left:362px;top:679px;width:1px;height:26px;background:#bebebe;z-index:2"></div>
<div style="left:402px;top:679px;width:1px;height:26px;background:#bebebe;z-index:2"></div>
<div style="left:498px;top:679px;width:1px;height:26px;background:#bebebe;z-index:2"></div>
<div style="left:548px;top:679px;width:1px;height:26px;background:#bebebe;z-index:2"></div>
<div style="left:634px;top:679px;width:1px;height:26px;background:#bebebe;z-index:2"></div>
<div style="left:687px;top:679px;width:1px;height:26px;background:#bebebe;z-index:2"></div>
<div style="left:755px;top:679px;width:1px;height:26px;background:#bebebe;z-index:2"></div>
<div style="left:823px;top:679px;width:1px;height:26px;background:#bebebe;z-index:2"></div>
<div style="left:892px;top:679px;width:1px;height:26px;background:#bebebe;z-index:2"></div>
<div style="left:931px;top:679px;width:1px;height:26px;background:#bebebe;z-index:2"></div>
<div style="left:970px;top:679px;width:1px;height:26px;background:#bebebe;z-index:2"></div>
<div class="t" style="left:4px;top:682px;width:80px;height:25px;line-height:25px;"><span style="color:#fff">意乙</span></div>
<div class="t" style="left:85px;top:681px;width:77px;height:25px;line-height:25px;">24-10-05</div>
<div class="t" style="left:163px;top:682px;width:107px;height:25px;line-height:25px;">比萨</div>
<div class="t" style="left:271px;top:681px;width:91px;height:25px;line-height:25px;"><span style="color:#d01818">3-1</span>(2-0)</div>
<div class="t" style="left:363px;top:681px;width:39px;height:25px;line-height:25px;">5-7</div>
<div class="t" style="left:403px;top:682px;width:95px;height:25px;line-height:25px;"><span style="color:#1f7f1f">切塞纳</span></div>
<div class="t" style="left:499px;top:681px;width:49px;height:25px;line-height:25px;">0.76</div>
<div class="t" style="left:549px;top:682px;width:85px;height:25px;line-height:25px;">平手</div>
<div class="t" style="left:635px;top:681px;width:52px;height:25px;line-height:25px;">1.14</div>
<div class="t" style="left:688px;top:681px;width:67px;height:25px;line-height:25px;">2.44</div>
<div class="t" style="left:756px;top:681px;width:67px;height:25px;line-height:25px;">3.00</div>
<div class="t" style="left:824px;top:681px;width:68px;height:25px;line-height:25px;">3.00</div>
<div class="t" style="left:893px;top:682px;width:38px;height:25px;line-height:25px;"><span style="color:#2424c0">负</span></div>
<div class="t" style="left:932px;top:682px;width:38px;height:25px;line-height:25px;"><span style="color:#2424c0">输</span></div>
<div class="t" style="left:971px;top:682px;width:59px;height:25px;line-height:25px;"><span style="color:#d01818">大</span></div>
<div style="left:3px;top:705px;width:1027px;height:26px;background:#fff"></div>
<div style="left:3px;top:705px;width:1px;height:27px;background:#bebebe;z-index:2"></div>
<div style="left:3px;top:731px;width:1027px;height:1px;background:#bebebe;z-index:2"></div>
<div class="t sm" style="left:3px;top:706px;width:1027px;height:26px;line-height:26px;text-align:center">近<span style="color:#d01818">10</span>场<span class="cm">,</span>胜4平2负4<span class="cm">,</span> 胜率<span class="co">:</span><span style="color:#d01818">40%</span> 让胜率<span class="co">:</span><span style="color:#d01818">50%</span> 大率<span class="co">:</span><span style="color:#d01818">40%</span> 单率<span class="co">:</span><span style="color:#d01818">40%</span></div>
<div class="sel" style="left:519px;top:56px;width:60px;height:18px"><span style="left:4px;">Crow*</span><svg class="chev" width="10" height="7" viewBox="0 0 10 7"><path d="M1 1.2 L5 5.2 L9 1.2" fill="none" stroke="#000" stroke-width="2"/></svg></div>
<div class="sel" style="left:587px;top:56px;width:50px;height:18px"><span style="left:4px;">終指</span><svg class="chev" width="10" height="7" viewBox="0 0 10 7"><path d="M1 1.2 L5 5.2 L9 1.2" fill="none" stroke="#000" stroke-width="2"/></svg></div>
<div class="sel" style="left:719px;top:56px;width:68px;height:18px"><span style="left:4px;">平均值</span><svg class="chev" width="10" height="7" viewBox="0 0 10 7"><path d="M1 1.2 L5 5.2 L9 1.2" fill="none" stroke="#000" stroke-width="2"/></svg></div>
<div class="sel" style="left:795px;top:56px;width:50px;height:18px"><span style="left:4px;">終指</span><svg class="chev" width="10" height="7" viewBox="0 0 10 7"><path d="M1 1.2 L5 5.2 L9 1.2" fill="none" stroke="#000" stroke-width="2"/></svg></div>
<div class="sel" style="left:934px;top:56px;width:51px;height:18px"><span style="left:4px;">全场</span><svg class="chev" width="10" height="7" viewBox="0 0 10 7"><path d="M1 1.2 L5 5.2 L9 1.2" fill="none" stroke="#000" stroke-width="2"/></svg></div>
<div class="sel" style="left:533px;top:407px;width:60px;height:18px"><span style="left:4px;">Crow*</span><svg class="chev" width="10" height="7" viewBox="0 0 10 7"><path d="M1 1.2 L5 5.2 L9 1.2" fill="none" stroke="#000" stroke-width="2"/></svg></div>
<div class="sel" style="left:601px;top:407px;width:50px;height:18px"><span style="left:4px;">終指</span><svg class="chev" width="10" height="7" viewBox="0 0 10 7"><path d="M1 1.2 L5 5.2 L9 1.2" fill="none" stroke="#000" stroke-width="2"/></svg></div>
<div class="sel" style="left:725px;top:407px;width:69px;height:18px"><span style="left:4px;">平均值</span><svg class="chev" width="10" height="7" viewBox="0 0 10 7"><path d="M1 1.2 L5 5.2 L9 1.2" fill="none" stroke="#000" stroke-width="2"/></svg></div>
<div class="sel" style="left:803px;top:407px;width:50px;height:18px"><span style="left:4px;">終指</span><svg class="chev" width="10" height="7" viewBox="0 0 10 7"><path d="M1 1.2 L5 5.2 L9 1.2" fill="none" stroke="#000" stroke-width="2"/></svg></div>
<div class="sel" style="left:936px;top:407px;width:51px;height:18px"><span style="left:4px;">全场</span><svg class="chev" width="10" height="7" viewBox="0 0 10 7"><path d="M1 1.2 L5 5.2 L9 1.2" fill="none" stroke="#000" stroke-width="2"/></svg></div>
<div class="sel" style="left:381px;top:36px;width:38px;height:17px"><span style="left:5px;font-family:Liberation Serif;font-size:14px">10</span><svg class="chev" width="10" height="7" viewBox="0 0 10 7"><path d="M1 1.2 L5 5.2 L9 1.2" fill="none" stroke="#000" stroke-width="2"/></svg></div>
<div class="sel" style="left:412px;top:387px;width:38px;height:17px"><span style="left:5px;font-family:Liberation Serif;font-size:14px">10</span><svg class="chev" width="10" height="7" viewBox="0 0 10 7"><path d="M1 1.2 L5 5.2 L9 1.2" fill="none" stroke="#000" stroke-width="2"/></svg></div>
</body></html>
